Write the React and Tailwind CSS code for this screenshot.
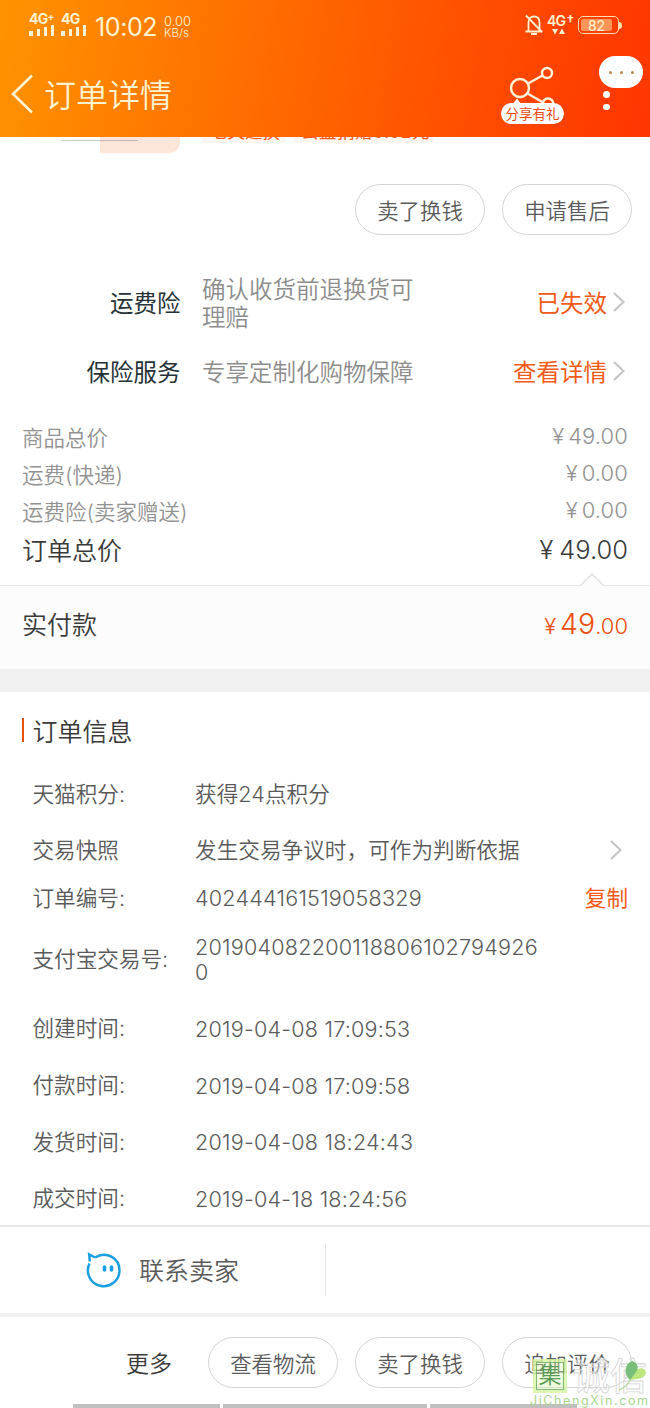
const services = [
  {
    label: "运费险",
    desc: "确认收货前退换货可理赔",
    action: "已失效",
    height: "h-[67px]",
  },
  {
    label: "保险服务",
    desc: "专享定制化购物保障",
    action: "查看详情",
    height: "h-[71px]",
  },
];

const prices = [
  { label: "商品总价", value: "49.00" },
  { label: "运费(快递)", value: "0.00" },
  { label: "运费险(卖家赠送)", value: "0.00" },
];

const details = [
  { label: "天猫积分:", value: "获得24点积分", height: "h-14" },
  { label: "交易快照", value: "发生交易争议时，可作为判断依据", height: "h-14", arrow: true },
  { label: "订单编号:", value: "402444161519058329", height: "h-10", copy: true },
  { label: "支付宝交易号:", value: "2019040822001188061027949260", height: "h-[82px]" },
  { label: "创建时间:", value: "2019-04-08 17:09:53", height: "h-[57px]" },
  { label: "付款时间:", value: "2019-04-08 17:09:58", height: "h-[57px]" },
  { label: "发货时间:", value: "2019-04-08 18:24:43", height: "h-14" },
  { label: "成交时间:", value: "2019-04-18 18:24:56", height: "h-[55px] pt-[2px]" },
];

function Chevron() {
  return (
    <svg width="14" height="22" viewBox="0 0 14 22" fill="none" stroke="#c4c4c4" strokeWidth="2">
      <path d="M2 2 L11.5 11 L2 20" />
    </svg>
  );
}

function PillButton({ children }) {
  return (
    <button className="h-[51px] w-[130px] shrink-0 rounded-full border border-[#d4d4d4] pt-[3px] text-[21.4px] text-[#5a5a5a]">
      {children}
    </button>
  );
}

function Signal({ label, plus }) {
  return (
    <div className="flex w-[26px] flex-col">
      <div className="flex h-[11px] items-center text-[14px] leading-[11px] font-bold tracking-[-0.7px]">
        {label}
        {plus && <span className="mb-1 text-[10px]">+</span>}
      </div>
      <div className="mt-px flex h-[11px] items-end gap-[4px]">
        <i className="h-[5px] w-[4px] bg-[#fff3d0]" />
        <i className="h-[7px] w-[3px] bg-[#fff3d0]" />
        <i className="h-[9px] w-[3px] bg-[#fff3d0]" />
        <i className="h-[11px] w-[3px] bg-[#fff3d0]" />
      </div>
    </div>
  );
}

function StatusBar() {
  return (
    <div className="flex h-[50px] items-center pl-[29px] pr-[28px] text-[#fff3d0]">
      <div className="-mt-[2px] flex gap-[6px]">
        <Signal label="4G" plus />
        <Signal label="4G" />
      </div>
      <span className="ml-[8px] w-[69px] pt-1 text-[25px] leading-6 font-normal tracking-[-0.4px] whitespace-nowrap">10:02</span>
      <div className="pt-[3px] text-[11.5px] leading-[12px] whitespace-nowrap">
        <div className="text-[13px]">0.00</div>
        <div>KB/s</div>
      </div>
      <div className="ml-auto flex items-center">
        <svg width="20" height="22" viewBox="0 0 20 22" fill="none" stroke="#fff3d0" strokeWidth="1.8">
          <path d="M4.5 17 V8.5 C4.5 4.5 7 2.5 10 2.5 S15.5 4.5 15.5 8.5 V17 M1.5 17.5 H18.5 M2 1.5 L18 18" />
          <path d="M7 20 H13" strokeWidth="2" />
        </svg>
        <div className="ml-[3px] flex w-[27px] flex-col">
          <div className="text-[14px] leading-[12px] font-semibold tracking-[-0.7px] whitespace-nowrap">4G<span className="ml-px">†</span></div>
          <svg className="mt-px ml-[5px]" width="13" height="7" viewBox="0 0 13 7" fill="#fff3d0">
            <path d="M0 1 H6 L3 6.5 Z M7 6 H13 L10 0.5 Z" />
          </svg>
        </div>
        <div className="ml-[4px] flex h-[18px] w-[41px] items-center rounded-[5px] border-[1.5px] border-[#ffe0ac] p-[2px]">
          <div className="h-full w-[31px] rounded-[2px] bg-[#ff9558] text-center text-[14px] leading-[13px] font-normal">82</div>
        </div>
        <div className="h-[7px] w-[3px] rounded-r bg-[#ffe0ac]" />
      </div>
    </div>
  );
}

function Header() {
  return (
    <header className="h-[137px] bg-[linear-gradient(100deg,#ff9300_0%,#ff6a00_42%,#ff3f00_88%,#ff3500_100%)]">
      <StatusBar />
      <div className="flex h-[87px] items-start pl-[11px]">
        <svg className="mt-[24px]" width="23" height="40" viewBox="0 0 23 40" fill="none" stroke="#fff3d0" strokeWidth="2.6">
          <path d="M21 1.5 L2 20 L21 38.5" />
        </svg>
        <h1 className="ml-[10px] pt-[23px] text-[32px] leading-[46px] text-[#fff3d0]">订单详情</h1>
        <div className="relative mt-[14px] ml-auto h-[62px] w-[63px]">
          <svg className="absolute left-[7px] top-0" width="48" height="44" viewBox="0 0 48 44" fill="none" stroke="#fff0d8" strokeWidth="2.5">
            <circle cx="12" cy="24" r="9" />
            <circle cx="39" cy="9" r="5" />
            <circle cx="40" cy="40" r="5.5" />
            <path d="M20 19.5 L34.500 11.5 M19.500 29.500 L36 39" />
            <path d="M4 41 L9 34.500 L14 41 Z" fill="#fff" stroke="none" />
          </svg>
          <span className="absolute top-[39px] left-0 h-[21px] w-[63px] rounded-full bg-white text-center text-[13.5px] leading-[22px] font-normal text-[#e84a10]">
            分享有礼
          </span>
        </div>
        <div className="mt-[6px] mr-[7px] ml-[35px] w-[44px]">
          <div className="flex h-[32px] items-center justify-center gap-[8px] rounded-full bg-white">
            <i className="size-[3px] rounded-full bg-[#b08a50]" />
            <i className="size-[3px] rounded-full bg-[#b08a50]" />
            <i className="size-[3px] rounded-full bg-[#b08a50]" />
          </div>
          <div className="ml-1 flex flex-col gap-[6px] pt-[3px]">
            <i className="size-[6.500px] rounded-full bg-white" />
            <i className="size-[6.500px] rounded-full bg-white" />
          </div>
        </div>
      </div>
    </header>
  );
}

// bottom edge of the product card, scrolled under the header
function ProductEdge() {
  return (
    <div className="flex h-[47px] items-start overflow-hidden">
      <div className="mt-[3px] ml-[61px] h-px w-[39px] bg-[#ccc]" />
      <div className="h-4 w-20 rounded-br-[10px] bg-[#fee5da]">
        <div className="mt-[3px] h-px w-[38px] bg-[#cdb5b5]" />
      </div>
      <div className="-mt-[16px] ml-[22px] flex gap-[7px] text-[17.5px] leading-[22px] font-normal whitespace-nowrap text-[#f0550f]">
        <span className="h-[22px] w-[84px] rounded bg-[#fff6f2] pl-2">七天退换</span>
        <span className="h-[22px] rounded bg-[#fff6f2] pr-1 pl-[8px] tracking-[0.5px]">公益捐赠0.02元</span>
      </div>
    </div>
  );
}

function Watermark() {
  return (
    <div className="pointer-events-none absolute top-[1359px] left-[530px] h-[49px] w-[120px]">
      <div className="absolute top-0 left-[3px] size-[34px] border-[3px] border-[#d4f4a0]/70 bg-[#d9f7ae]/40">
        <div className="size-full border-[1.5px] border-[#69a55b]/80 text-center text-[23px] leading-[24px] text-[#579b55]">集</div>
      </div>
      <span className="absolute top-px left-[43px] text-[37px] leading-[34px] font-medium whitespace-nowrap text-white/40 [-webkit-text-stroke:0.8px_#d4d4d4]">诚信</span>
      <svg className="absolute top-[1px] left-[88px]" width="32" height="32" viewBox="0 0 32 32">
        <path d="M12 20 C5 13 7 4 14 1 C20 3 20 7 19 10 C22 7 27 8 28 12 C28 19 18 19 12 20 Z" fill="#bde77c" />
        <path d="M12 20 C5 13 7 4 14 1 C20 3 21 8 18 12 Z" fill="#79bd7a" />
        <path d="M12 20 C10 25 6 28 1 30" fill="none" stroke="#b9dc9c" strokeWidth="1.3" />
      </svg>
      <span className="absolute top-[35px] left-0 text-[12.5px] leading-[14px] font-normal tracking-[1.6px] whitespace-nowrap text-[#a9d68f]">JiChengXin.com</span>
    </div>
  );
}

export default function App() {
  return (
    <div className="relative h-[1408px] w-[650px] overflow-hidden bg-white font-['Inter','Noto_Sans_CJK_SC',sans-serif] font-[350]">
      <Header />
      <ProductEdge />

      <div className="flex justify-end gap-[17px] pr-[18px]">
        <PillButton>卖了换钱</PillButton>
        <PillButton>申请售后</PillButton>
      </div>

      <section className="mt-[35px] text-[23.5px]">
        {services.map((s) => (
          <div key={s.label} className={`flex items-center pt-px pr-[24px] ${s.height}`}>
            <span className="w-[180.5px] text-right font-normal text-[#263238]">{s.label}</span>
            <span className="ml-[21.5px] w-[225px] leading-[28px] text-[#8c8c8c]">{s.desc}</span>
            <span className="ml-auto font-normal text-[#f25a16]">{s.action}</span>
            <span className="-mt-1 ml-[5px]"><Chevron /></span>
          </div>
        ))}
      </section>

      <section className="mt-[11px] h-[166px] px-[22px]">
        {prices.map((p) => (
          <div key={p.label} className="flex h-[37px] items-center justify-between pt-px text-[21.5px] text-[#929292]">
            <span>{p.label}</span>
            <span className="pb-1 text-[22px] tracking-[0.1px]"><span className="mr-1">¥</span>{p.value}</span>
          </div>
        ))}
        <div className="flex h-[42px] items-center justify-between pt-px text-[25px] text-[#3a3a3a]">
          <span>订单总价</span>
          <span className="pb-[3px] text-[25.500px]"><span className="mr-[6px]">¥</span>49.00</span>
        </div>
      </section>

      <section className="relative flex h-[84px] items-center justify-between border-t border-[#e6e6e6] bg-[#fcfcfc] px-[22px] pb-1">
        <svg className="absolute -top-[13px] right-[46px]" width="24" height="14" viewBox="0 0 24 14" fill="#fdfdfd" stroke="#dedede" strokeWidth="1.3">
          <path d="M0 13 L12 1 L24 13" />
        </svg>
        <span className="text-[25px] text-[#3a3a3a]">实付款</span>
        <span className="pb-[3px] text-[22px] text-[#ec4e0c]"><span className="mr-1">¥</span><span className="text-[28.500px]">49</span>.00</span>
      </section>

      <div className="h-[23px] bg-[#f0f0f0]" />

      <section className="pr-[22px] pl-[32.5px]">
        <div className="-ml-[11px] flex h-[74px] items-center pt-[5px]">
          <i className="-mt-[3px] h-6 w-[2.5px] bg-[#e9500f]" />
          <h2 className="ml-[8.500px] pt-[2px] text-[25px] text-[#3a3a3a]">订单信息</h2>
        </div>
        {details.map((d) => (
          <div key={d.label} className={`flex items-center text-[21.6px] text-[#5a5a5a] ${d.height}`}>
            <span className="w-[162.5px] shrink-0">{d.label}</span>
            <span className={`w-[350px] pt-px leading-[25px] break-all ${/^\d/.test(d.value) ? "tracking-[0.21px]" : "tracking-[0.05px]"}`}>
              {d.value}
            </span>
            {d.arrow && <span className="mr-[5px] ml-auto"><Chevron /></span>}
            {d.copy && <button className="ml-auto font-normal text-[#f25a16]">复制</button>}
          </div>
        ))}
      </section>

      <footer>
        <div className="flex h-[88px] items-center border-t-2 border-[#e6e6e6]">
          <div className="flex h-[52px] w-[326px] items-center border-r border-[#e4e4e4] pl-[86px]">
            <svg width="36" height="36" viewBox="0 0 36 36" fill="none" stroke="#1a9fe0" strokeWidth="2.5">
              <path d="M9 5.500 C20 -1.500 33.500 6 33.500 18.500 A15.800 15.800 0 1 1 3.500 11.500" />
              <path d="M3.800 9.500 L3.200 2.500 L9 5.500" />
              <path d="M18.500 15 V18 M25.500 15 V18" strokeWidth="3.600" strokeLinecap="round" />
            </svg>
            <span className="ml-[17px] pt-[3px] text-[25px] text-[#5a5a5a]">联系卖家</span>
          </div>
        </div>
        <div className="h-1 bg-[#f1f1f1]" />
        <div className="flex items-center justify-end gap-[17px] pt-5 pr-[18px]">
          <span className="mr-[19px] pt-[3px] text-[23px] text-[#3a3a3a]">更多</span>
          <PillButton>查看物流</PillButton>
          <PillButton>卖了换钱</PillButton>
          <PillButton>追加评价</PillButton>
        </div>
        <div className="mt-4 flex gap-[3px] pl-[73px]">
          <i className="h-1 w-[147px] bg-[#c0c0c0]" />
          <i className="h-1 w-[204px] bg-[#c0c0c0]" />
          <i className="h-1 w-[147px] bg-[#c0c0c0]" />
        </div>
      </footer>

      <Watermark />
    </div>
  );
}
